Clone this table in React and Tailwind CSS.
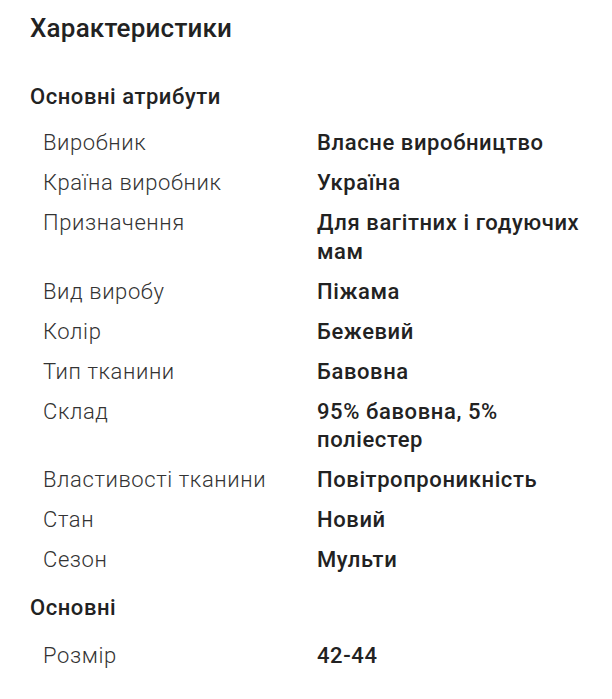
import React from "react";

const groups = [
  {
    title: "Основні атрибути",
    top: "mt-[38px]",
    gap: "mt-[17px]",
    rows: [
      ["Виробник", "Власне виробництво"],
      ["Країна виробник", "Україна"],
      ["Призначення", "Для вагітних і годуючих мам"],
      ["Вид виробу", "Піжама"],
      ["Колір", "Бежевий"],
      ["Тип тканини", "Бавовна"],
      ["Склад", "95% бавовна, 5% поліестер"],
      ["Властивості тканини", "Повітропроникність"],
      ["Стан", "Новий"],
      ["Сезон", "Мульти"],
    ],
  },
  {
    title: "Основні",
    top: "mt-[18px]",
    gap: "mt-[19px]",
    rows: [["Розмір", "42-44"]],
  },
];

const App = () => {
  return (
    <div
      className="bg-white pl-[30px] pr-[18px] pt-[12px] text-[#222]"
      style={{ fontFamily: "Roboto, 'Noto Sans', sans-serif" }}
    >
      <h2 className="text-[26px] font-medium leading-[32px] tracking-[0.2px]">Характеристики</h2>

      {groups.map((group) => (
        <div key={group.title} className={group.top}>
          <h3 className="text-[22px] font-medium leading-[30px] tracking-[0.55px]">{group.title}</h3>
          <div className={`${group.gap} flex flex-col gap-[11.5px]`}>
            {group.rows.map(([label, value]) => (
              <div
                key={label}
                className="grid grid-cols-[274px_1fr] pl-[13px] text-[22px] leading-[28.5px] tracking-[0.6px]"
              >
                <span className="font-light text-[#333]">{label}</span>
                <span className="font-medium">{value}</span>
              </div>
            ))}
          </div>
        </div>
      ))}
    </div>
  );
};

export default App;
